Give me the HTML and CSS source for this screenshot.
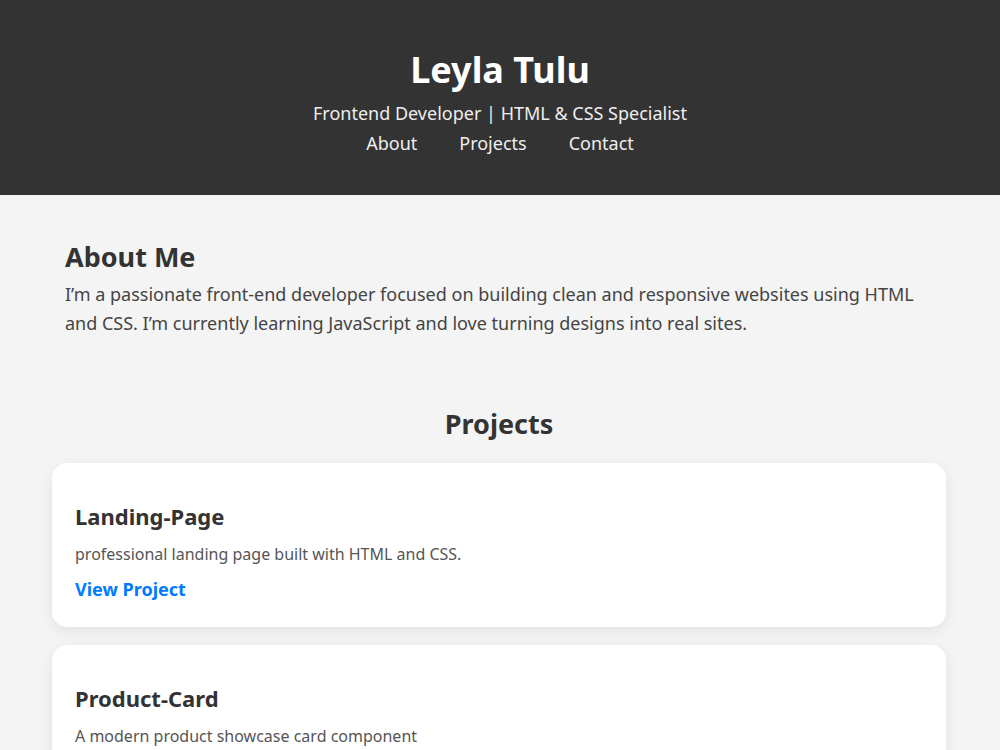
FILE: index.html
```html
<!DOCTYPE html>
<html lang="en">
<head>
  <meta charset="UTF-8">
  <title>Leyla Tulu | Portfolio</title>
  <link rel="stylesheet" href="styles.css">
</head>
<body>

  <header class="site-header">
    <h1>Leyla Tulu</h1>
    <p class="tagline">Frontend Developer | HTML &amp; CSS Specialist</p>
    <nav class="nav">
      <a href="#about">About</a>
      <a href="#projects">Projects</a>
      <a href="#contact">Contact</a>
    </nav>
  </header>

  <main>
    <section id="about" class="about">
      <h2>About Me</h2>
      <p>I’m a passionate front-end developer focused on building clean and responsive websites using HTML and CSS. I’m currently learning JavaScript and love turning designs into real sites.</p>
    </section>

    <section id="projects" class="projects">
      <h2>Projects</h2>

      <div class="card">
        <h3>Landing-Page</h3>
        <p>professional landing page built with HTML and CSS.</p>
        <a href="#">View Project</a>
      </div>

      <div class="card">
        <h3>Product-Card</h3>
        <p>A modern product showcase card component</p>
        <a href="#">View Project</a>
      </div>
    </section>

    <section id="contact" class="contact">
      <h2>Contact</h2>
      <p>Email: leyla@example.com</p>
    </section>
  </main>

</body>
</html>
```

FILE: styles.css
```css
body {
  margin: 0;
  background-color: #f4f4f4;
  color: #333;
  font-family: "Noto Sans", "Open Sans", sans-serif;
  font-size: 18px;
  line-height: 1.6;
}
.site-header {
  background-color: #333;
  color: #fff;
  text-align: center;
  padding: 41px 20px 37px;
}
.site-header h1 {
  margin: 0;
  font-size: 36px;
}
.tagline {
  margin: 0 0 2px;
  color: #eee;
}
.nav {
  display: flex;
  justify-content: center;
  gap: 42px;
}
.nav a {
  color: #eee;
  text-decoration: none;
}
.about {
  margin: 40px 65px 0;
}
.about h2,
.projects h2,
.contact h2 {
  margin: 0;
  font-size: 27px;
}
.about h2 {
  margin-bottom: 2px;
}
.about p {
  margin: 0;
  color: #444;
}
.projects {
  margin: 64px 54px 0 52px;
}
.projects h2 {
  text-align: center;
  margin-bottom: 18px;
}
.card {
  background: #fff;
  border-radius: 15px;
  padding: 24px 23px 23px;
  margin-bottom: 18px;
  box-shadow: 0 4px 14px rgba(0, 0, 0, 0.08);
}
.card h3 {
  margin: 12px 0 8px;
  font-size: 22px;
}
.card p {
  margin: 0 0 7px;
  font-size: 16px;
  color: #555;
}
.card a {
  color: #007bff;
  font-weight: bold;
  text-decoration: none;
}
.contact {
  margin: 40px 65px;
}
```
